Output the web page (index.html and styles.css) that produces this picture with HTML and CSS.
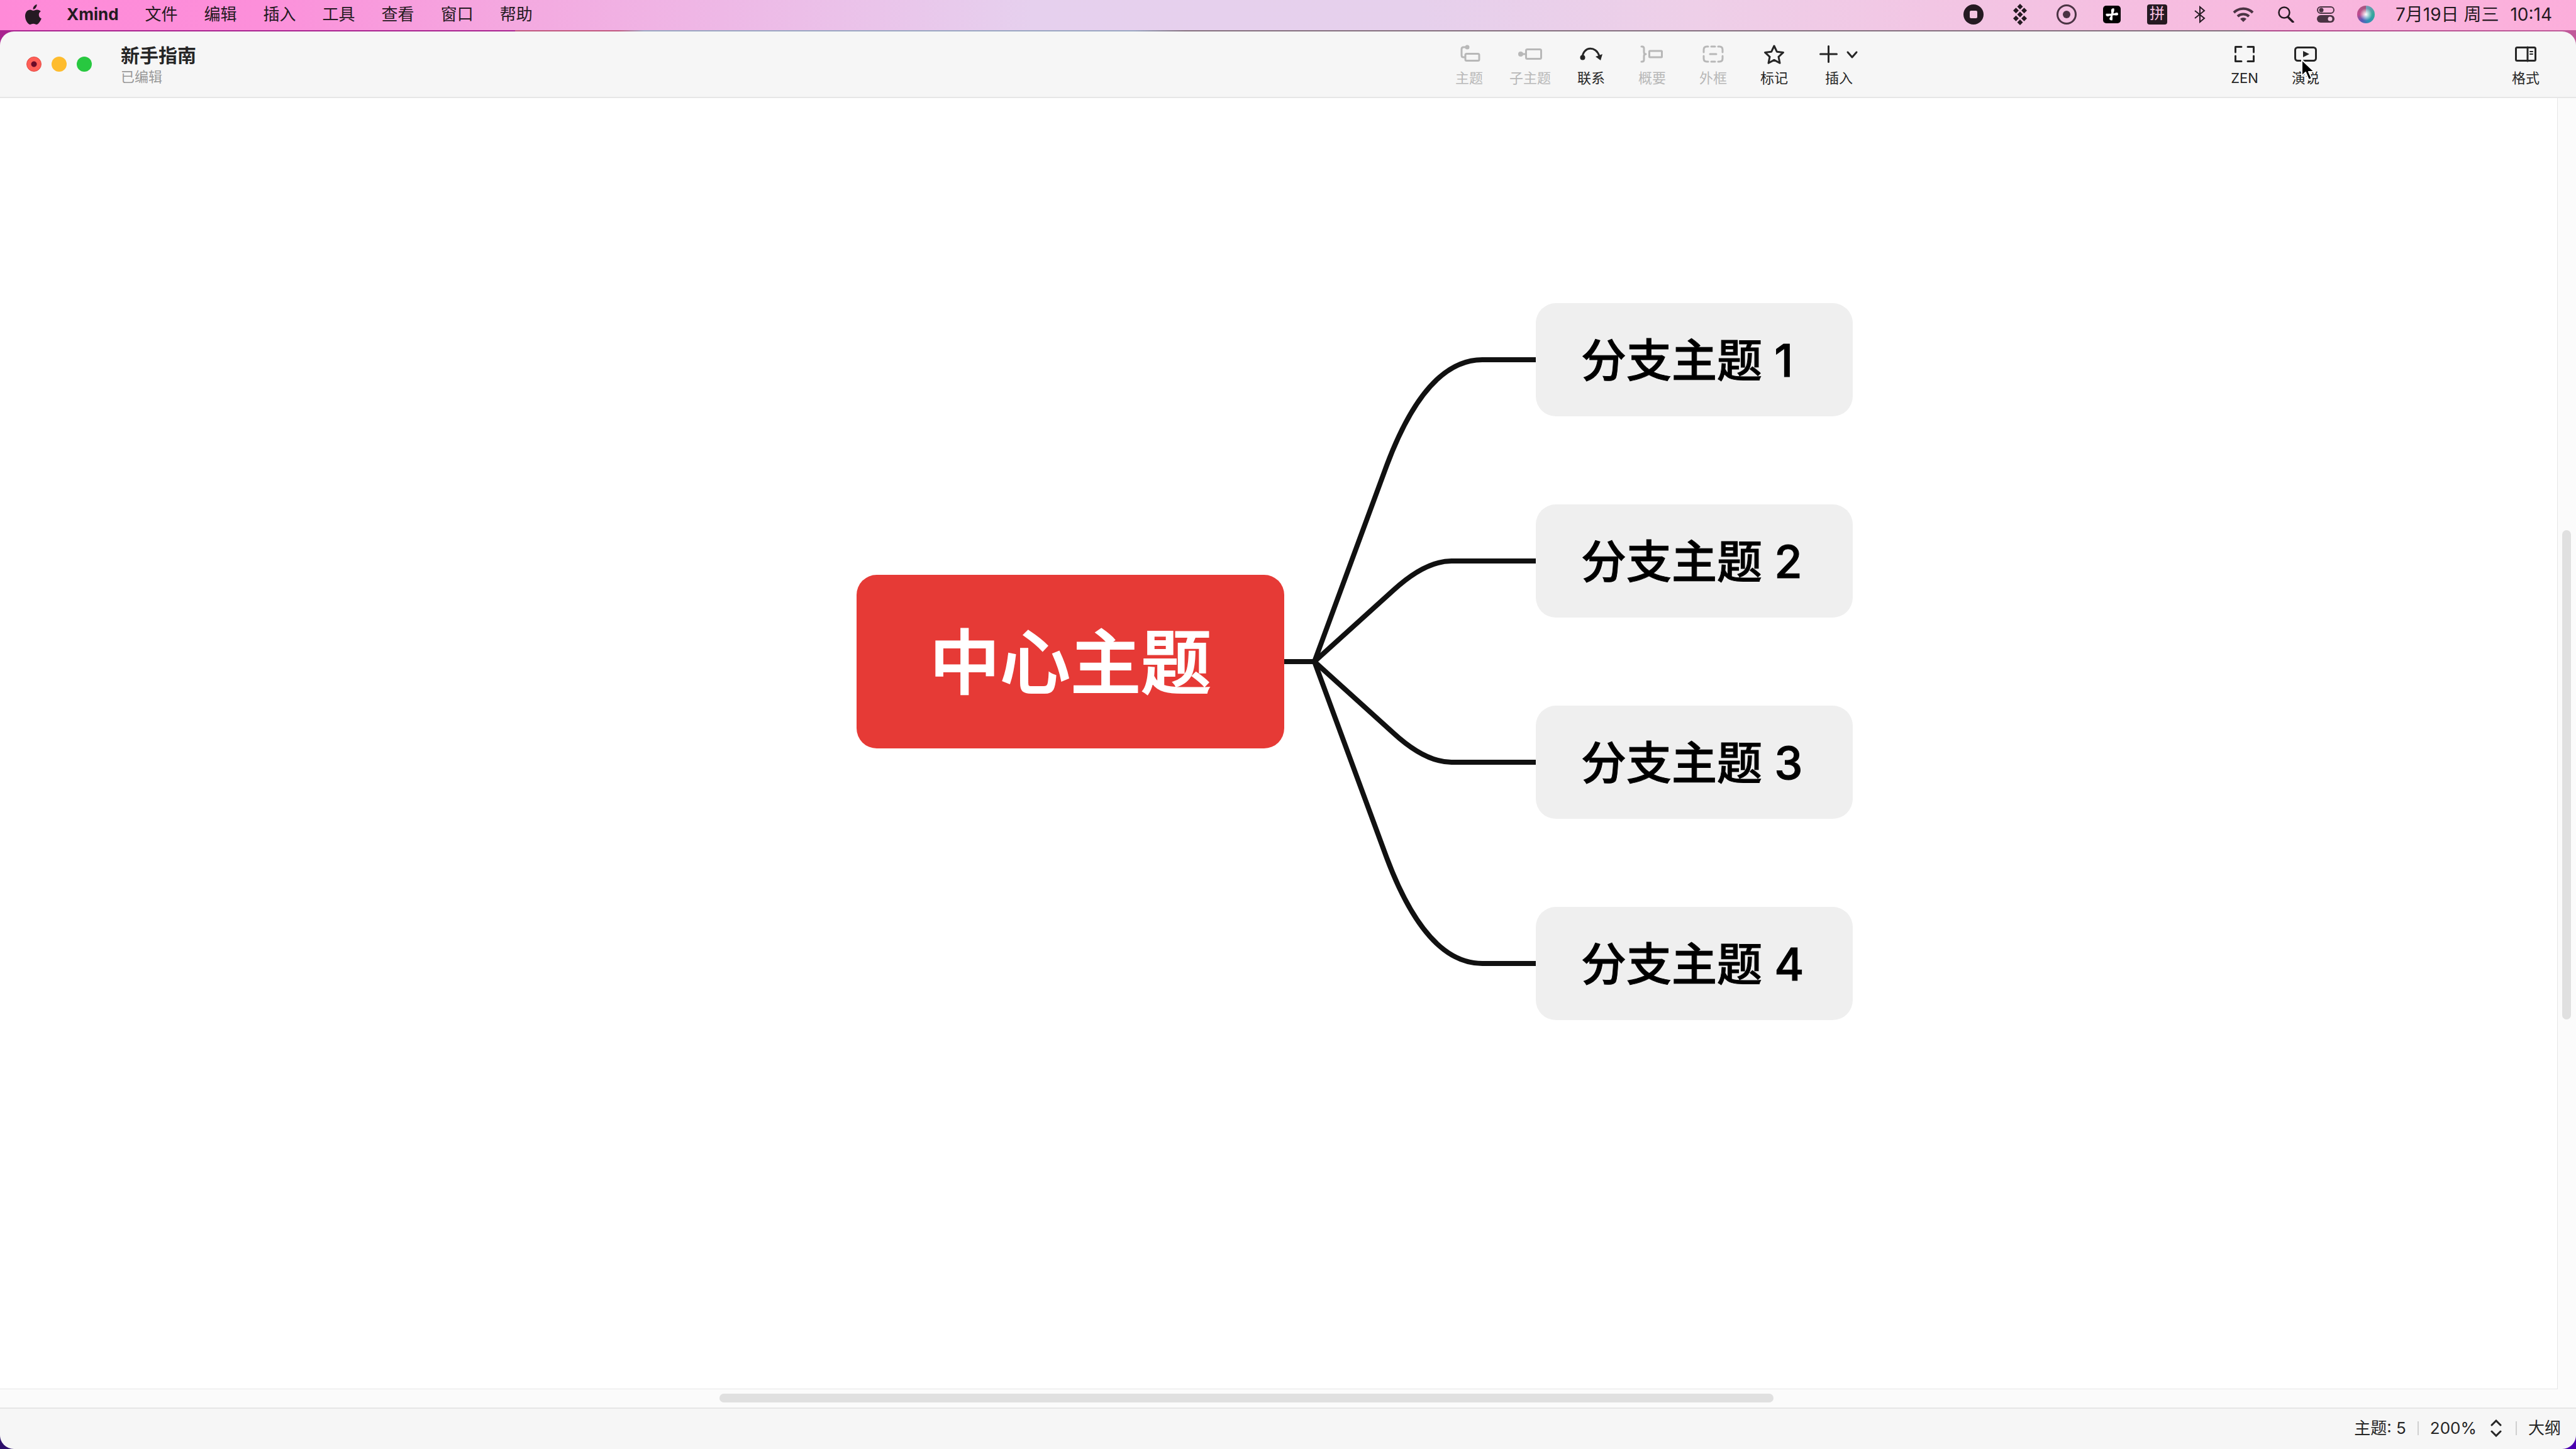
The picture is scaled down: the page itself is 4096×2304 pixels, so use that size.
FILE: index.html
```html
<!DOCTYPE html>
<html lang="zh-CN">
<head>
    <meta charset="UTF-8">
    <meta name="viewport" content="width=device-width, initial-scale=1.0">
    <title>新手指南</title>
    <link rel="stylesheet" href="styles.css">
</head>
<body>
    <nav class="menubar">
        <a class="apple" href="#" aria-label="Apple">
            <svg width="26" height="32" viewBox="0 0 26 32"><path d="M18.5 0c.3 2-.5 4-1.700 5.500C15.600 7 14 7.900 12.600 7.800c-.2-2 .6-3.900 1.800-5.200C15.600 1.200 17.200.2 18.500 0zM24.900 11c-2 1.200-3.200 3.100-3.100 5.400 0 2.700 1.500 5 4.100 6.100-.6 1.800-1.500 3.500-2.600 5.100-1.500 2.200-3 4.300-5.200 4.300-2 0-2.700-1.200-5.100-1.200-2.500 0-3.300 1.200-5.200 1.200-2.100.1-3.700-2.100-5.100-4.200C.3 24-1.200 17.600 1.100 13.200c1.200-2.900 3.900-4.700 6.800-4.800 2 0 3.800 1.400 5 1.400 1.300 0 3.600-1.600 6.200-1.400 2.300.2 4.300 1 5.800 2.600z"/></svg>
        </a>
        <a class="app-name" href="#">Xmind</a>
        <a href="#">文件</a>
        <a href="#">编辑</a>
        <a href="#">插入</a>
        <a href="#">工具</a>
        <a href="#">查看</a>
        <a href="#">窗口</a>
        <a href="#">帮助</a>
        <div class="tray">
            <svg width="32" height="32" viewBox="0 0 32 32"><circle cx="16" cy="16" r="16"/><rect class="cut" x="10" y="10" width="12" height="12" rx="2"/></svg>
            <svg width="32" height="34" viewBox="0 0 32 34"><path d="M16 0l4.500 4.500L16 9l-4.500-4.500zM16 12.500l4.500 4.500-4.500 4.500-4.500-4.500zM16 25l4.500 4.500L16 34l-4.500-4.500zM9.500 6.300l4.500 4.500-4.500 4.500L5 10.800zM22.500 6.300l4.500 4.500-4.500 4.500-4.500-4.500zM9.500 18.700l4.500 4.500-4.500 4.500L5 23.200zM22.500 18.700l4.500 4.500-4.500 4.500-4.500-4.500z"/></svg>
            <svg width="32" height="32" viewBox="0 0 32 32"><circle cx="16" cy="16" r="14.500" fill="none" stroke="#4a3343" stroke-width="3"/><circle class="soft" cx="16" cy="16" r="6"/></svg>
            <svg width="28" height="28" viewBox="0 0 28 28"><rect width="28" height="28" rx="5" fill="#000"/><path d="M17.500 4.500c-3-.8-5 1-4.700 4 .2 2 .7 3 .2 4-1.500.8-4-.2-8 .3-1.200 1.200-.5 3.800 1.500 4.200 2.500.3 4-1.500 5.500-1 .3 1.500-1.500 3-2 5 .3 1.500 2 2.600 4.500 2.500 1.200-2.500.2-5 .5-7.500.8-1.500 5 .3 8.500-1 1-1.500.5-3.500-1-4-2.500-.2-4 1.800-6 1 .2-2 2-3.500 1-7.500z" fill="#fff"/></svg>
            <span class="ime">拼</span>
            <svg width="20" height="28" viewBox="0 0 20 28"><path d="M2 8l15 12-7 6V2l7 6L2 20" fill="none" stroke="#251a22" stroke-width="2"/></svg>
            <svg width="34" height="24" viewBox="0 0 34 24"><g fill="none" stroke="#4a3343" stroke-width="4"><path d="M2 9a21 21 0 0 1 30 0"/><path d="M8 15a13 13 0 0 1 18 0"/></g><path class="soft" d="M12 19a7 7 0 0 1 10 0l-5 5z"/></svg>
            <div class="system">
                <svg width="26" height="26" viewBox="0 0 26 26"><g fill="none" stroke="#251a22" stroke-width="2.500" stroke-linecap="round"><circle cx="10" cy="10" r="8.500"/><path d="M16 17l8 8" stroke-width="3.500"/></g></svg>
                <svg width="28" height="26" viewBox="0 0 28 26"><rect x="1" y="1" width="26" height="10" rx="5" fill="none" stroke="#4a3343" stroke-width="2"/><circle class="soft" cx="7" cy="6" r="3.500"/><rect class="soft" y="14" width="28" height="12" rx="6"/><circle class="cut" cx="21" cy="20" r="3.500"/></svg>
                <span class="siri"></span>
            </div>
        </div>
        <time class="clock"><span>7月19日 周三</span><span>10:14</span></time>
    </nav>

    <main class="window">
        <header class="toolbar">
            <div class="lights">
                <button class="light close" aria-label="关闭"></button>
                <button class="light minimize" aria-label="最小化"></button>
                <button class="light zoom" aria-label="缩放"></button>
            </div>
            <div class="doc">
                <h1>新手指南</h1>
                <p>已编辑</p>
            </div>
            <div class="tools">
                <button class="tool" disabled>
                    <svg width="40" height="32" viewBox="0 0 40 32"><rect x="14" y="15.500" width="22" height="11" rx="2"/><path d="M13 21h-2q-3 0-3-3V8q0-3 3-3h4"/><circle class="dot" cx="17" cy="5" r="3.500"/></svg>
                    <span>主题</span>
                </button>
                <button class="tool" disabled>
                    <svg width="40" height="32" viewBox="0 0 40 32"><rect x="13.500" y="8.500" width="24" height="15" rx="2"/><path d="M4 16h9"/><circle class="dot" cx="5" cy="16" r="4"/></svg>
                    <span>子主题</span>
                </button>
                <button class="tool">
                    <svg width="40" height="32" viewBox="0 0 40 32"><path d="M6 21C8 3 28 3 33 19"/><circle class="dot" cx="6.500" cy="21.500" r="4"/><path class="dot" d="M27 20l11-4-3 10z"/></svg>
                    <span>联系</span>
                </button>
                <button class="tool" disabled>
                    <svg width="40" height="32" viewBox="0 0 40 32"><rect x="15.500" y="11" width="20" height="10" rx="1"/><path d="M3 4h1q3 0 3 3v6q0 3 3 3-3 0-3 3v6q0 3-3 3H3"/></svg>
                    <span>概要</span>
                </button>
                <button class="tool" disabled>
                    <svg width="40" height="32" viewBox="0 0 40 32"><path d="M5 13V9q0-5 5-5h2M17 4h6M28 4h2q5 0 5 5v4M35 19v4q0 5-5 5h-2M23 28h-6M12 28h-2q-5 0-5-5v-4M15 16h10"/></svg>
                    <span>外框</span>
                </button>
                <button class="tool">
                    <svg width="40" height="32" viewBox="0 0 40 32"><path d="M20 3l4.300 9.200 10.200 1.200-7.500 6.900 2 10L20 25.400l-9 4.900 2-10-7.500-6.900 10.200-1.200z"/></svg>
                    <span>标记</span>
                </button>
                <button class="tool insert">
                    <svg width="62" height="32" viewBox="0 0 62 32"><path d="M1.500 16h26M14.500 3.500v25M45 13l7 8 7-8"/></svg>
                    <span>插入</span>
                </button>
            </div>
            <div class="tools view-tools">
                <button class="tool">
                    <svg width="40" height="32" viewBox="0 0 40 32"><path d="M5.500 13V4.500H15M25 4.500h9.500V13M34.500 19v8.500H25M15 27.500H5.500V19"/></svg>
                    <span>ZEN</span>
                </button>
                <button class="tool">
                    <svg width="40" height="32" viewBox="0 0 40 32"><rect x="3.500" y="5.500" width="33" height="21" rx="4"/><path class="dot" d="M16 11l10 5-10 5z"/></svg>
                    <span>演说</span>
                    <svg class="cursor" width="24" height="38" viewBox="0 0 24 38"><path d="M2 2v26l6-6 5 12 5-2-5-11h9z"/></svg>
                </button>
            </div>
            <button class="tool format">
                <svg width="40" height="32" viewBox="0 0 40 32"><rect x="4.500" y="5.500" width="31" height="21" rx="2"/><path d="M23 5v22"/><path d="M27 12h4M27 16h4" stroke-width="2"/></svg>
                <span>格式</span>
            </button>
        </header>

        <div class="workspace">
            <section class="canvas">
                <svg class="links" width="504" height="976" viewBox="0 0 504 976">
                    <path d="M0 488h48L163 176Q226 8 315 8h85"/>
                    <path d="M48 488L173 375Q224 328 266 328h134"/>
                    <path d="M48 488L173 601Q224 648 266 648h134"/>
                    <path d="M48 488L163 800Q226 968 315 968h85"/>
                </svg>
                <div class="topic central">中心主题</div>
                <div class="topic branch b1">分支主题 1</div>
                <div class="topic branch b2">分支主题 2</div>
                <div class="topic branch b3">分支主题 3</div>
                <div class="topic branch b4">分支主题 4</div>
            </section>
            <div class="scroll-y"><div class="thumb"></div></div>
            <div class="scroll-x"><div class="thumb"></div></div>
        </div>

        <footer class="statusbar">
            <span>主题: 5</span>
            <i class="divider"></i>
            <button class="zoom-level">200%
                <svg width="18" height="28" viewBox="0 0 18 28"><path d="M2 9l7-7 7 7M2 19l7 7 7-7"/></svg>
            </button>
            <i class="divider"></i>
            <button>大纲</button>
        </footer>
    </main>
</body>
</html>
```

FILE: styles.css
```css
* {
    box-sizing: border-box;
}

body {
    margin: 0;
    min-height: 100vh;
    display: flex;
    flex-direction: column;
    font-family: Inter, "Noto Sans CJK SC", sans-serif;
    color: #262626;
    background: linear-gradient(90deg, #2d0f6b, #4b00b0) bottom / 100% 50% no-repeat,
        linear-gradient(90deg, #a8238f 0 20%, #c0587f 20% 24%, #9aa6c2 25% 44%, #85707f 46% 87%, #b04c8c 88%, #c05a9a 100%);
}

button {
    padding: 0;
    border: none;
    background: none;
    font: inherit;
    color: inherit;
}

svg {
    display: block;
}

/* system menu bar */
.menubar {
    display: flex;
    align-items: center;
    gap: 42px;
    height: 48px;
    padding: 0 38px 2px 40px;
    margin-bottom: 2px;
    font-size: 26px;
    line-height: 32px;
    background: linear-gradient(90deg, #ff8ad8 0%, #fc8fda 10%, #f4a9e0 20%, #eeb8e6 28%, #e6d0ee 40%, #e6d0ec 55%, #eecfe8 66%, #f6bde0 84%, #fcaedb 100%);
}

.menubar a {
    color: #251a22;
    text-decoration: none;
    white-space: nowrap;
}

.menubar svg {
    fill: #251a22;
}

.menubar .app-name {
    margin-left: -2px;
    font-weight: 700;
}

.tray,
.system {
    display: flex;
    align-items: center;
    gap: 42px;
}

.tray {
    margin-left: auto;
}

.system {
    gap: 36px;
    margin-left: -4px;
}

.tray .cut {
    fill: #f4c4e1;
}

.tray .soft {
    fill: #4a3343;
}

.ime {
    width: 32px;
    height: 32px;
    border-radius: 4px;
    background: #251a22;
    color: #f6bfe0;
    font-size: 24px;
    line-height: 30px;
    text-align: center;
}

.siri {
    width: 28px;
    height: 28px;
    border-radius: 50%;
    background: radial-gradient(circle at 50% 50%, #fff 0, rgba(255, 255, 255, 0) 50%),
        conic-gradient(#7a9ab8, #35a79b 25%, #2f8fb5 45%, #5a57b8 60%, #c24a8e 75%, #a5567e);
}

.clock {
    display: flex;
    gap: 18px;
    margin-left: -9px;
    color: #251a22;
    font-size: 28px;
    white-space: nowrap;
}

/* application window */
.window {
    flex: 1;
    display: flex;
    flex-direction: column;
    border-radius: 22px;
    overflow: hidden;
    background: #f6f6f6;
}

.toolbar {
    display: flex;
    align-items: center;
    height: 106px;
    padding: 0 54px 0 42px;
    border-bottom: 2px solid #e6e6e6;
}

.lights {
    display: flex;
    gap: 16px;
}

.light {
    width: 24px;
    height: 24px;
    border-radius: 50%;
}

.close {
    background: radial-gradient(circle, #6b0c28 0 4px, #ff5f57 5px);
    border: 1px solid #e2463f;
}

.minimize {
    background: #febc2e;
}

.zoom {
    background: #28c840;
}

.doc {
    margin-left: 46px;
}

.doc h1 {
    margin: 0;
    font-size: 30px;
    line-height: 40px;
    font-weight: 700;
}

.doc p {
    margin: 0;
    font-size: 22px;
    line-height: 28px;
    color: #999;
}

.tools {
    display: flex;
    gap: 17px;
    margin-left: auto;
}

.view-tools {
    margin-left: 565px;
}

.tool {
    position: relative;
    width: 80px;
    display: flex;
    flex-direction: column;
    align-items: center;
    gap: 6px;
    margin-top: 5px;
    font-size: 22px;
    line-height: 32px;
    white-space: nowrap;
}

.tool svg {
    fill: none;
    stroke: currentColor;
    stroke-width: 3;
    stroke-linecap: round;
    stroke-linejoin: round;
}

.tool .dot {
    fill: currentColor;
    stroke: none;
}

.tool:disabled {
    color: #b8b8b8;
}

.insert {
    margin-left: 6px;
}

.format {
    margin-left: 270px;
    margin-right: -14px;
}

.tool .cursor {
    position: absolute;
    left: 32px;
    top: 23px;
    fill: #000;
    stroke: #fff;
    stroke-width: 2;
}

/* mind map */
.workspace {
    flex: 1;
    display: grid;
    grid-template-columns: 1fr 29px;
    grid-template-rows: 1fr 29px;
    background: #fbfbfb;
}

.canvas {
    position: relative;
    overflow: hidden;
    background: #fff;
    border-right: 1px solid #e6e6e6;
    border-bottom: 1px solid #e6e6e6;
}

.links {
    position: absolute;
    left: 2042px;
    top: 408px;
    fill: none;
    stroke: #111;
    stroke-width: 8;
}

.topic {
    position: absolute;
    display: flex;
    align-items: center;
    border-radius: 32px;
    font-weight: 500;
    -webkit-text-stroke: 1px currentColor;
    white-space: nowrap;
}

.central {
    left: 1362px;
    top: 758px;
    width: 680px;
    height: 276px;
    justify-content: center;
    padding-bottom: 12px;
    background: #e63a36;
    color: #fff;
    font-size: 112px;
    -webkit-text-stroke-width: 2px;
}

.branch {
    left: 2442px;
    width: 504px;
    height: 180px;
    padding: 0 0 10px 72px;
    background: #efefef;
    color: #000;
    font-size: 72px;
}

.b1 {
    top: 326px;
}

.b2 {
    top: 646px;
}

.b3 {
    top: 966px;
}

.b4 {
    top: 1286px;
}

.scroll-y {
    padding: 687px 7px 0;
}

.scroll-x {
    padding: 7px 0 0 1144px;
}

.thumb {
    border-radius: 7px;
    background: #e0e0e0;
}

.scroll-y .thumb {
    width: 14px;
    height: 778px;
}

.scroll-x .thumb {
    width: 1676px;
    height: 14px;
}

/* status bar */
.statusbar {
    display: flex;
    align-items: center;
    justify-content: flex-end;
    gap: 18px;
    height: 66px;
    padding: 0 24px 2px 0;
    border-top: 2px solid #e6e6e6;
    font-size: 26px;
    line-height: 32px;
}

.divider {
    width: 2px;
    height: 22px;
    background: #d0d0d0;
}

.zoom-level {
    display: flex;
    align-items: center;
    gap: 22px;
    margin-right: 4px;
}

.zoom-level svg {
    fill: none;
    stroke: currentColor;
    stroke-width: 3;
    stroke-linecap: round;
}
```
